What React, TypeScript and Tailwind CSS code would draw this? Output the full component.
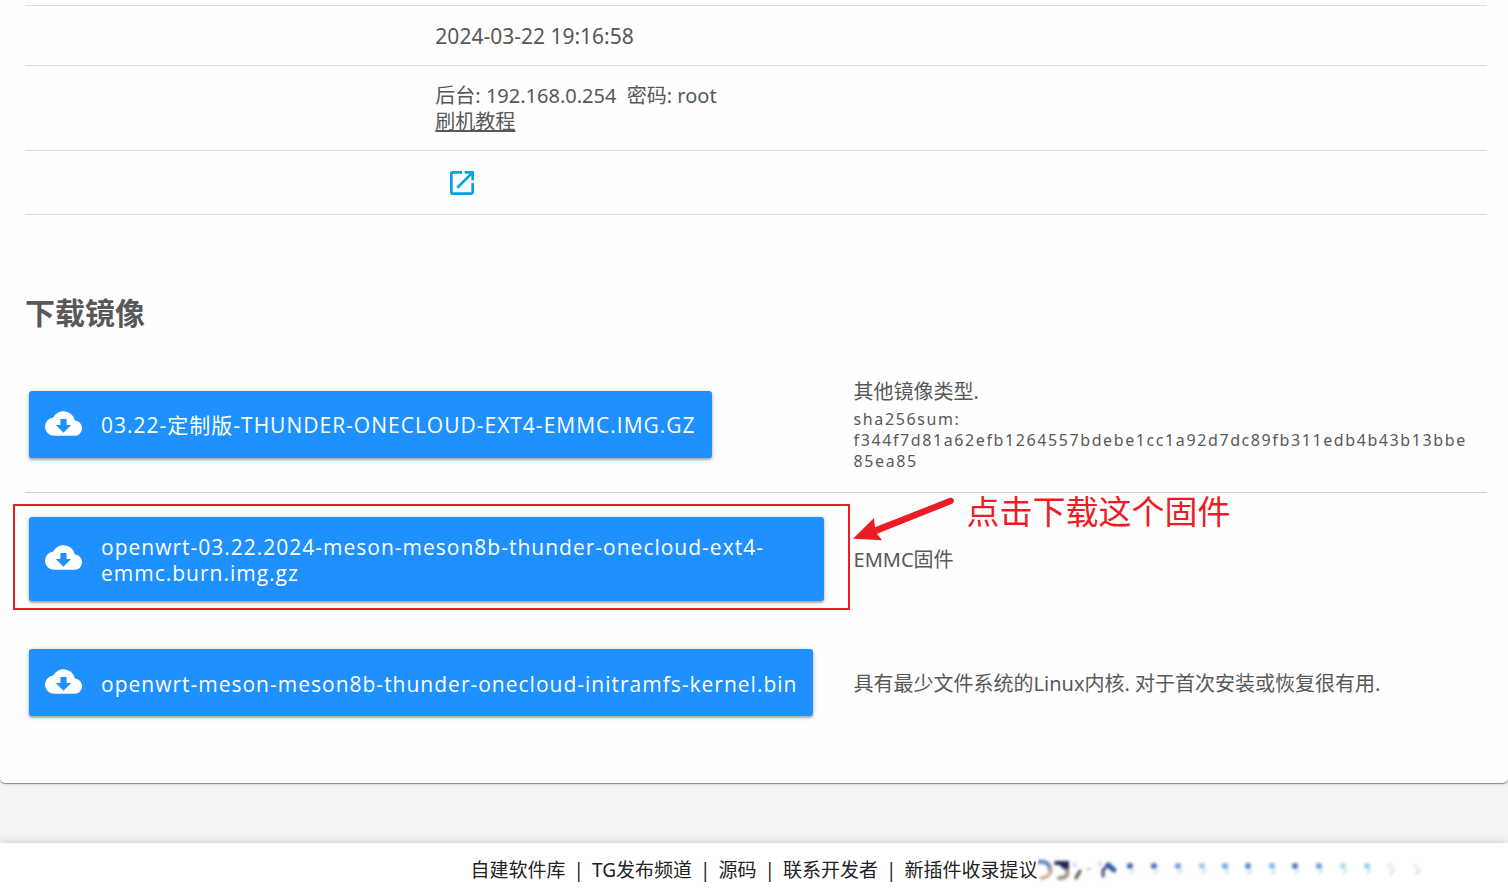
import type { ReactNode } from 'react';
import { MdCloudDownload, MdOpenInNew } from 'react-icons/md';

type Download = {
    name: string;
    description: string;
    sha256?: string;
    note?: string;
};

const DOWNLOADS: Download[] = [
    {
        name: '03.22-定制版-THUNDER-ONECLOUD-EXT4-EMMC.IMG.GZ',
        description: '其他镜像类型.',
        sha256: 'f344f7d81a62efb1264557bdebe1cc1a92d7dc89fb311edb4b43b13bbe85ea85',
    },
    {
        name: 'openwrt-03.22.2024-meson-meson8b-thunder-onecloud-ext4-emmc.burn.img.gz',
        description: 'EMMC固件',
        note: '点击下载这个固件',
    },
    {
        name: 'openwrt-meson-meson8b-thunder-onecloud-initramfs-kernel.bin',
        description: '具有最少文件系统的Linux内核. 对于首次安装或恢复很有用.',
    },
];

const ROW_HEIGHTS = ['h-[135px] border-b border-[#d0d0d0]', 'h-[133px]', 'h-[115px]'];

const FOOTER_LINKS = ['自建软件库', 'TG发布频道', '源码', '联系开发者', '新插件收录提议'];

const SPECKS = [
    { x: 92, color: '#3a62b0' },
    { x: 116, color: '#3f68b8' },
    { x: 140, color: '#6f9ad6' },
    { x: 164, color: '#9cc6ec' },
    { x: 187, color: '#6ea4de' },
    { x: 210, color: '#4f86cc' },
    { x: 234, color: '#86b6e2' },
    { x: 257, color: '#4673b4' },
    { x: 281, color: '#6c98d0' },
    { x: 305, color: '#b4dcec' },
    { x: 329, color: '#9accdc' },
    { x: 352, color: '#dcf2f6' },
    { x: 378, color: '#e4f6f8' },
];

function SpecRow({ className, children }: { className: string; children?: ReactNode }) {
    return (
        <tr>
            <td className="w-[28%] border-b border-[#dddddd]" />
            <td className={`border-b border-[#dddddd] pl-px ${className}`}>{children}</td>
        </tr>
    );
}

function DownloadButton({ name }: { name: string }) {
    return (
        <a
            href="#"
            className="inline-flex min-h-[67px] max-w-[795px] items-center gap-[19px] rounded-[3px] bg-[#1e90ff] px-4 py-[15px] align-middle font-['Open_Sans','Noto_Sans_CJK_SC',sans-serif] text-white shadow-[0_2px_2px_rgba(0,0,0,0.22),0_1px_5px_rgba(0,0,0,0.22)]"
        >
            <MdCloudDownload className="-mt-1 -mb-0.5 size-[37px] shrink-0" />
            <span className="pt-0.5 text-[21px] leading-[26px] tracking-[1px]">{name}</span>
        </a>
    );
}

function Note({ text }: { text: string }) {
    return (
        <div className="absolute left-[3px] top-0 flex gap-3 text-[#ed1c24]">
            <svg width="102" height="50" viewBox="0 0 102 50" fill="currentColor" aria-hidden="true">
                <path d="M0 45.7 21 25 22 34.3 96.3 5C98.5 4 100.6 5.2 100.9 7.1 101.2 9 100.2 10.4 98.6 11L24 40.7 29 47.3Z" />
            </svg>
            <span className="whitespace-nowrap text-[33px] leading-[38px]">{text}</span>
        </div>
    );
}

function Smudge() {
    return (
        <svg className="absolute left-full top-0 -mt-5" width="466" height="50" viewBox="0 0 466 50" aria-hidden="true">
            <defs>
                <filter id="soft" x="-20%" y="-50%" width="140%" height="200%">
                    <feGaussianBlur stdDeviation="1.4" />
                </filter>
            </defs>
            <g filter="url(#soft)" fill="none" strokeLinecap="round">
                <path d="M1 25C8 24 12 27 12 33" stroke="#5a7fc0" strokeWidth="4" />
                <path d="M13 31C14 38 8 41 3 41" stroke="#c9a08c" strokeWidth="3" />
                <path d="M18 26H29V32L24 28" stroke="#1c2850" strokeWidth="4" />
                <path d="M29 34C31 40 25 41 21 41" stroke="#a58f86" strokeWidth="4" />
                <path d="M42 34 38 41" stroke="#5c4038" strokeWidth="3" />
                <path d="M36 27 37 29M62 26V28" stroke="#d8c8f6" strokeWidth="3" />
                <path d="M50 32H51" stroke="#a9c8bc" strokeWidth="3" />
                <path d="M65 39V33L71 27" stroke="#3c4a70" strokeWidth="3" />
                <path d="M70 28 76 33" stroke="#2f58a4" strokeWidth="5" />
                {SPECKS.map(({ x, color }) => (
                    <g key={x}>
                        <circle cx={x} cy="29" r="3" fill={color} />
                        <path d={`M${x + 3} 33 ${x + 1} 36`} stroke="#cdeade" strokeWidth="3" />
                    </g>
                ))}
            </g>
        </svg>
    );
}

export default function App() {
    return (
        <div className="min-h-screen overflow-x-hidden bg-[#f4f4f4] font-['Noto_Sans','Noto_Sans_CJK_SC',sans-serif] text-[20px] leading-[26px] text-[#585858]">
            <main className="rounded-b-[5px] bg-[#fefefe] pb-[43px] pl-[25px] pr-[21px] pt-[5px] shadow-[0_1px_1px_rgba(0,0,0,0.4),0_1px_4px_rgba(0,0,0,0.12)]">
                <table className="w-full table-fixed border-separate border-spacing-0 border-t border-[#dddddd]">
                    <tbody>
                        <SpecRow className="h-[60px] text-[21px]">2024-03-22 19:16:58</SpecRow>
                        <SpecRow className="pb-[15px] pt-[17px]">
                            后台: 192.168.0.254 &nbsp;密码: root
                            <br />
                            <a href="#" className="underline">刷机教程</a>
                        </SpecRow>
                        <SpecRow className="h-16">
                            <a href="#" aria-label="打开链接" className="ml-[11px] inline-block align-middle text-[#00a3e1]">
                                <MdOpenInNew className="size-8" />
                            </a>
                        </SpecRow>
                    </tbody>
                </table>

                <h2 className="mt-20 text-[30px] font-bold leading-9">下载镜像</h2>

                <table className="mt-[26px] w-full table-fixed border-collapse">
                    <tbody>
                        {DOWNLOADS.map(({ name, description, sha256, note }, index) => (
                            <tr key={name} className={ROW_HEIGHTS[index]}>
                                <td className="relative w-[56.4%] px-1">
                                    {note && (
                                        <div className="pointer-events-none absolute -left-3 right-0 top-[11px] h-[106px] border-2 border-[#ed1c24]" />
                                    )}
                                    <DownloadButton name={name} />
                                </td>
                                <td className="relative pl-1 pr-3 pt-0.5">
                                    {note && <Note text={note} />}
                                    {description}
                                    {sha256 && (
                                        <div className="mt-1 break-all text-base leading-[21px] tracking-widest">
                                            sha256sum:
                                            <br />
                                            {sha256}
                                        </div>
                                    )}
                                </td>
                            </tr>
                        ))}
                    </tbody>
                </table>
            </main>

            <footer className="mt-[60px] flex justify-center bg-white pb-3 pt-[14px] text-[19px] text-[#222222] shadow-[0_0_10px_rgba(0,0,0,0.18)]">
                <nav className="relative flex gap-2">
                    {FOOTER_LINKS.map((label, index) => (
                        <span key={label} className="flex gap-2">
                            {index > 0 && <span>|</span>}
                            <a href="#">{label}</a>
                        </span>
                    ))}
                    <Smudge />
                </nav>
            </footer>
        </div>
    );
}
